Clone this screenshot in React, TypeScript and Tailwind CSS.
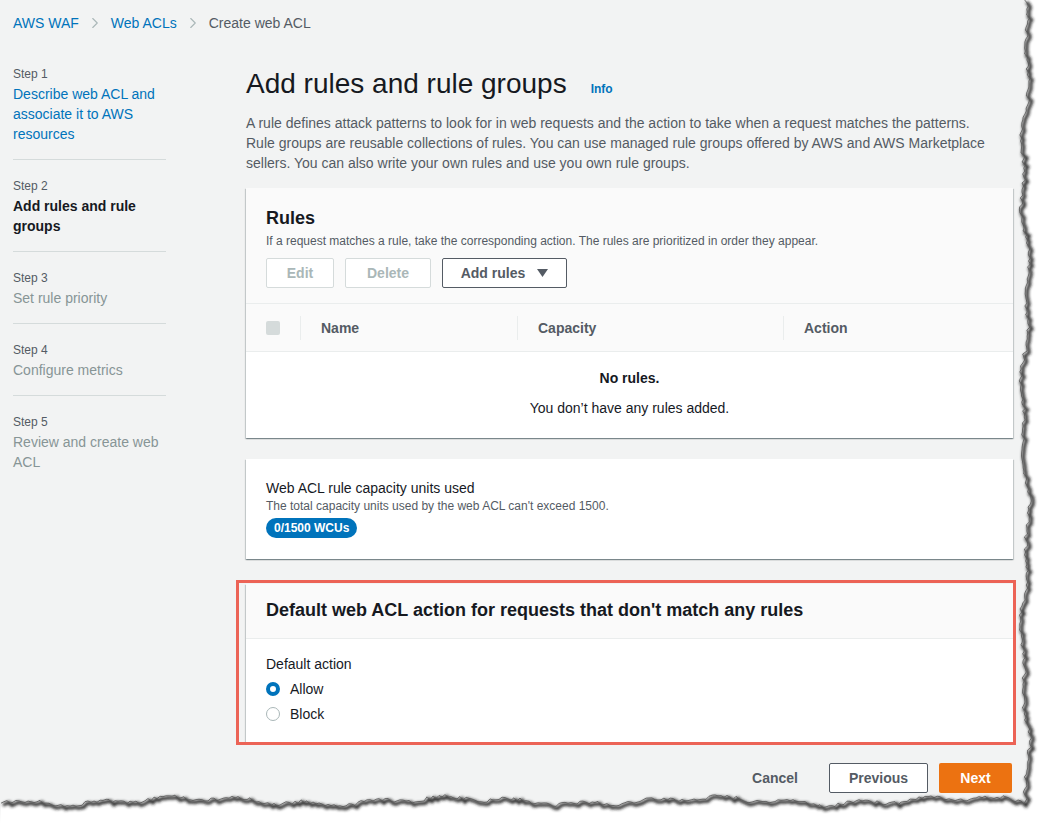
import { ChevronRight } from "lucide-react";

const font = { fontFamily: "'Liberation Sans', Arial, sans-serif" };

function seeded(seed: number) {
    let s = seed;
    return () => {
        s = (s * 16807) % 2147483647;
        return (s - 1) / 2147483646;
    };
}

// torn paper edge along the right and bottom of the screenshot
function TornEdge() {
    const r = seeded(42);
    const pts: string[] = [];
    for (let y = 0; y <= 800; y += 3) {
        const x = 1025 + 3 * Math.sin(y / 37) + 2 * Math.sin(y / 13 + 1) + (r() - 0.5) * 4;
        pts.push(`${x.toFixed(1)},${y}`);
    }
    for (let x = 1024; x >= 0; x -= 3) {
        const y = 801 + 3 * Math.sin(x / 41) + 2 * Math.sin(x / 11 + 2) + (r() - 0.5) * 4;
        pts.push(`${x},${y.toFixed(1)}`);
    }
    const edge = pts.join(" ");
    const fill = `${edge} 0,824 1040,824 1040,0`;
    return (
        <svg className="pointer-events-none absolute inset-0" width="1040" height="824">
            <defs>
                <filter id="blur" x="-5%" y="-5%" width="110%" height="110%">
                    <feGaussianBlur stdDeviation="1.4" />
                </filter>
            </defs>
            <polygon points={fill} fill="#ffffff" />
            <polyline
                points={edge}
                fill="none"
                stroke="#1a1a1a"
                strokeWidth="3"
                filter="url(#blur)"
                transform="translate(2,2)"
            />
            <polyline points={edge} fill="none" stroke="#555" strokeWidth="0.8" />
        </svg>
    );
}

function Step({ n, children, state }: { n: number; children: React.ReactNode; state: "done" | "current" | "todo" }) {
    const cls =
        state === "done"
            ? "text-[#0073bb]"
            : state === "current"
              ? "font-bold text-[#16191f]"
              : "text-[#879596]";
    return (
        <div className="pt-[18px] pb-[15px] border-b border-[#d5dbdb] last:border-b-0 first:pt-0">
            <div className="text-xs leading-4 text-[#545b64]">Step {n}</div>
            <div className={`mt-[2px] text-sm leading-5 ${cls}`}>{children}</div>
        </div>
    );
}

const card = "bg-white shadow-[0_1px_1px_0_rgba(0,28,36,0.3),1px_1px_1px_0_rgba(0,28,36,0.15),-1px_1px_1px_0_rgba(0,28,36,0.15)]";

export default function App() {
    return (
        <div style={font} className="relative w-[1040px] h-[824px] overflow-hidden bg-[#f2f3f3] text-[#16191f]">
            {/* Breadcrumb */}
            <nav className="flex items-center px-[13px] pt-[13px] text-sm leading-5">
                <span className="text-[#0073bb]">AWS WAF</span>
                <ChevronRight className="mx-[7px] h-[18px] w-[18px] text-[#aab7b8]" strokeWidth={1.5} />
                <span className="text-[#0073bb]">Web ACLs</span>
                <ChevronRight className="mx-[7px] h-[18px] w-[18px] text-[#aab7b8]" strokeWidth={1.5} />
                <span className="text-[#545b64]">Create web ACL</span>
            </nav>

            <div className="flex pt-[33px]">
                {/* Wizard steps */}
                <aside className="ml-[13px] w-[153px] shrink-0">
                    <Step n={1} state="done">Describe web ACL and associate it to AWS resources</Step>
                    <Step n={2} state="current">Add rules and rule groups</Step>
                    <Step n={3} state="todo">Set rule priority</Step>
                    <Step n={4} state="todo">Configure metrics</Step>
                    <Step n={5} state="todo">Review and create web ACL</Step>
                </aside>

                <main className="ml-[80px] w-[767px] shrink-0">
                    <div className="flex items-baseline gap-[24px]">
                        <h1 className="text-[28px] leading-9 font-normal">Add rules and rule groups</h1>
                        <span className="text-xs font-bold text-[#0073bb]">Info</span>
                    </div>
                    <p className="mt-[11px] text-sm leading-5 text-[#545b64]">
                        A rule defines attack patterns to look for in web requests and the action to take when a request matches the patterns.
                        <br />
                        Rule groups are reusable collections of rules. You can use managed rule groups offered by AWS and AWS Marketplace
                        <br />
                        sellers. You can also write your own rules and use you own rule groups.
                    </p>

                    {/* Rules */}
                    <section className={`mt-[15px] ${card}`}>
                        <div className="bg-[#fafafa] px-5 pt-[19px] pb-[15px]">
                            <h2 className="text-lg leading-[22px] font-bold">Rules</h2>
                            <p className="mt-[4px] text-xs leading-4 text-[#545b64]">
                                If a request matches a rule, take the corresponding action. The rules are prioritized in order they appear.
                            </p>
                            <div className="mt-[9px] flex gap-[11px]">
                                <button className="h-[30px] w-[68px] rounded-[2px] border border-[#d5dbdb] bg-white text-sm font-bold text-[#aab7b8]">
                                    Edit
                                </button>
                                <button className="h-[30px] w-[86px] rounded-[2px] border border-[#d5dbdb] bg-white text-sm font-bold text-[#aab7b8]">
                                    Delete
                                </button>
                                <button className="flex h-[30px] w-[125px] items-center justify-center gap-[12px] rounded-[2px] border border-[#545b64] bg-white text-sm font-bold text-[#545b64]">
                                    Add rules
                                    <svg width="11" height="8" viewBox="0 0 11 8">
                                        <path d="M0 0h11L5.5 8z" fill="#545b64" />
                                    </svg>
                                </button>
                            </div>
                        </div>
                        <div className="grid h-[49px] grid-cols-[54px_217px_266px_1fr] items-center border-y border-[#eaeded] bg-[#fafafa] text-sm font-bold text-[#545b64]">
                            <div className="pl-5">
                                <div className="h-[14px] w-[14px] rounded-[2px] bg-[#d5dbdb]" />
                            </div>
                            <div className="flex h-6 items-center border-l border-[#eaeded] pl-5">Name</div>
                            <div className="flex h-6 items-center border-l border-[#eaeded] pl-5">Capacity</div>
                            <div className="flex h-6 items-center border-l border-[#eaeded] pl-5">Action</div>
                        </div>
                        <div className="pt-[16px] pb-[20px] text-center text-sm leading-5">
                            <div className="font-bold">No rules.</div>
                            <div className="mt-[10px]">You don’t have any rules added.</div>
                        </div>
                    </section>

                    {/* Capacity */}
                    <section className={`mt-[21px] px-5 pt-[19px] pb-[20px] ${card}`}>
                        <div className="text-sm leading-5">Web ACL rule capacity units used</div>
                        <div className="text-xs leading-4 text-[#545b64]">The total capacity units used by the web ACL can't exceed 1500.</div>
                        <span className="mt-[4px] inline-flex h-5 items-center rounded-full bg-[#0073bb] px-[8px] text-xs font-bold text-white">
                            0/1500 WCUs
                        </span>
                    </section>

                    {/* Default action */}
                    <div className="relative mt-[25px]">
                        <section className={card}>
                            <div className="border-b border-[#eaeded] bg-[#fafafa] px-5 pt-[15px] pb-[17px]">
                                <h2 className="text-lg leading-[22px] font-bold">
                                    Default web ACL action for requests that don't match any rules
                                </h2>
                            </div>
                            <div className="px-5 pt-[15px] pb-[18px] text-sm leading-5">
                                <div>Default action</div>
                                <label className="mt-[5px] flex items-center gap-[10px]">
                                    <span className="h-[14px] w-[14px] rounded-full border-[4px] border-[#0073bb] bg-white" />
                                    Allow
                                </label>
                                <label className="mt-[5px] flex items-center gap-[10px]">
                                    <span className="h-[14px] w-[14px] rounded-full border border-[#aab7b8] bg-white" />
                                    Block
                                </label>
                            </div>
                        </section>
                        <div className="pointer-events-none absolute -top-[4px] -right-[3px] -bottom-[3px] -left-[10px] border-[3px] border-[#ec6356]" />
                    </div>

                    {/* Footer */}
                    <div className="mt-[21px] flex justify-end gap-[11px] pr-[1px] text-sm font-bold">
                        <button className="h-[30px] px-5 text-[#545b64]">Cancel</button>
                        <button className="h-[30px] w-[99px] rounded-[2px] border border-[#545b64] bg-white text-[#545b64]">
                            Previous
                        </button>
                        <button className="h-[30px] w-[73px] rounded-[2px] bg-[#ec7211] text-white">Next</button>
                    </div>
                </main>
            </div>

            <TornEdge />
        </div>
    );
}
